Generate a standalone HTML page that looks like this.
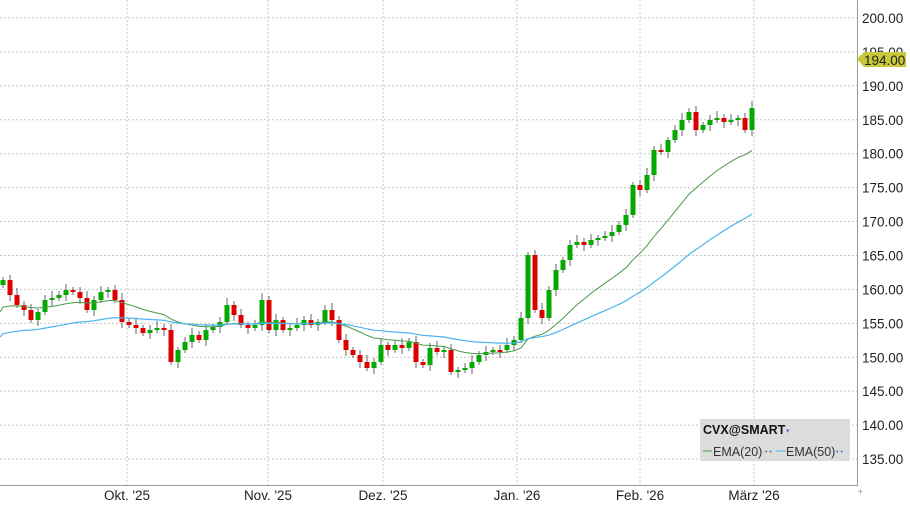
<!DOCTYPE html>
<html><head><meta charset="utf-8"><style>
html,body{margin:0;padding:0;background:#fff;width:910px;height:511px;overflow:hidden;font-family:"Liberation Sans",sans-serif}
svg{position:absolute;left:0;top:0}
</style></head><body>
<svg id="s" width="910" height="511" xmlns="http://www.w3.org/2000/svg">
<g id="grid" stroke="#c8c8c8" stroke-dasharray="2,2" stroke-width="1"></g>
<line x1="857.5" y1="0" x2="857.5" y2="486" stroke="#999"/>
<line x1="0" y1="485.5" x2="857" y2="485.5" stroke="#999"/>
<g id="c"></g>
<polyline id="e20" fill="none" stroke="#4a9a4a" stroke-width="1"/>
<polyline id="e50" fill="none" stroke="#4ab4f0" stroke-width="1.2"/>
<g id="lab" font-size="13.5" fill="#222"></g>
<polygon points="857,59 864,52 906,52 906,67 864,67" fill="#c8c83a"/>
<text x="864" y="65" font-size="13.5" fill="#222">194.00</text>
<rect x="700" y="419" width="150" height="42" fill="#dcdcdc"/>
<text x="703" y="434" font-size="12.5" font-weight="bold" fill="#111">CVX@SMART</text>
<text x="786" y="433" font-size="7" fill="#4a7ab0">▾</text>
<line x1="703" y1="451" x2="712" y2="451" stroke="#4a9a4a"/>
<text x="713" y="456" font-size="12.5" fill="#333">EMA(20)</text>
<text x="765" y="454" font-size="7" fill="#4a7ab0">• •</text>
<line x1="776" y1="451" x2="786" y2="451" stroke="#4ab4f0"/>
<text x="786" y="456" font-size="12.5" fill="#333">EMA(50)</text>
<text x="836" y="454" font-size="7" fill="#4a7ab0">• •</text>
<text x="858" y="494" font-size="8" fill="#888">+</text>
</svg>
<script>
(function(){
var NS="http://www.w3.org/2000/svg";
function el(p,t,a,txt){var e=document.createElementNS(NS,t);for(var k in a)e.setAttribute(k,a[k]);if(txt)e.textContent=txt;document.getElementById(p).appendChild(e);return e;}
for(var p=135;p<=200;p+=5){var y=18+(200-p)*6.785;el("grid","line",{x1:0,y1:y,x2:857,y2:y});
 el("lab","text",{x:862,y:y+5},p.toFixed(2));}
var months=[[127,"Okt. '25"],[268,"Nov. '25"],[383,"Dez. '25"],[517,"Jan. '26"],[640,"Feb. '26"],[754,"März '26"]];
months.forEach(function(m){el("grid","line",{x1:m[0],y1:0,x2:m[0],y2:485});el("lab","text",{x:m[0],y:500,"text-anchor":"middle"},m[1]);});
var cl=[280,295,305,310,320,312,300,298,295,290,292,298,310,300,292,290,300,322,325,328,333,330,328,330,362,350,342,335,340,330,327,322,305,315,325,328,325,300,330,320,330,328,325,320,325,322,310,320,340,350,355,362,368,362,345,350,345,348,342,362,365,348,352,350,372,370,368,362,355,352,350,350,345,340,318,255,310,318,290,270,260,245,242,245,240,238,236,232,225,215,185,190,175,150,152,140,130,120,112,130,125,120,118,122,120,118,130,108];
var n=cl.length,x0=3,dx=(752-3)/(n-1),prev=285,e20=310,e50=336,p20="",p50="";
for(var i=0;i<n;i++){var x=x0+i*dx,c=cl[i],o=prev,up=c<o;
 var tp=Math.min(o,c),bt=Math.max(o,c);if(bt-tp<2){bt=tp+2;}
 el("c","line",{x1:x,y1:tp-3-(i*7%5),x2:x,y2:bt+3+(i*3%6),stroke:"#666","stroke-width":1});
 el("c","rect",{x:x-2.5,y:tp,width:5,height:bt-tp,fill:up?"#00aa00":"#dd0000"});
 e20+=(c-e20)*2/21; e50+=(c-e50)*2/51;
 p20+=x.toFixed(1)+","+e20.toFixed(1)+" "; p50+=x.toFixed(1)+","+e50.toFixed(1)+" ";
 prev=c;}
document.getElementById("e20").setAttribute("points","0,312 "+p20);
document.getElementById("e50").setAttribute("points","0,337 "+p50);
})();
</script>
</body></html>
